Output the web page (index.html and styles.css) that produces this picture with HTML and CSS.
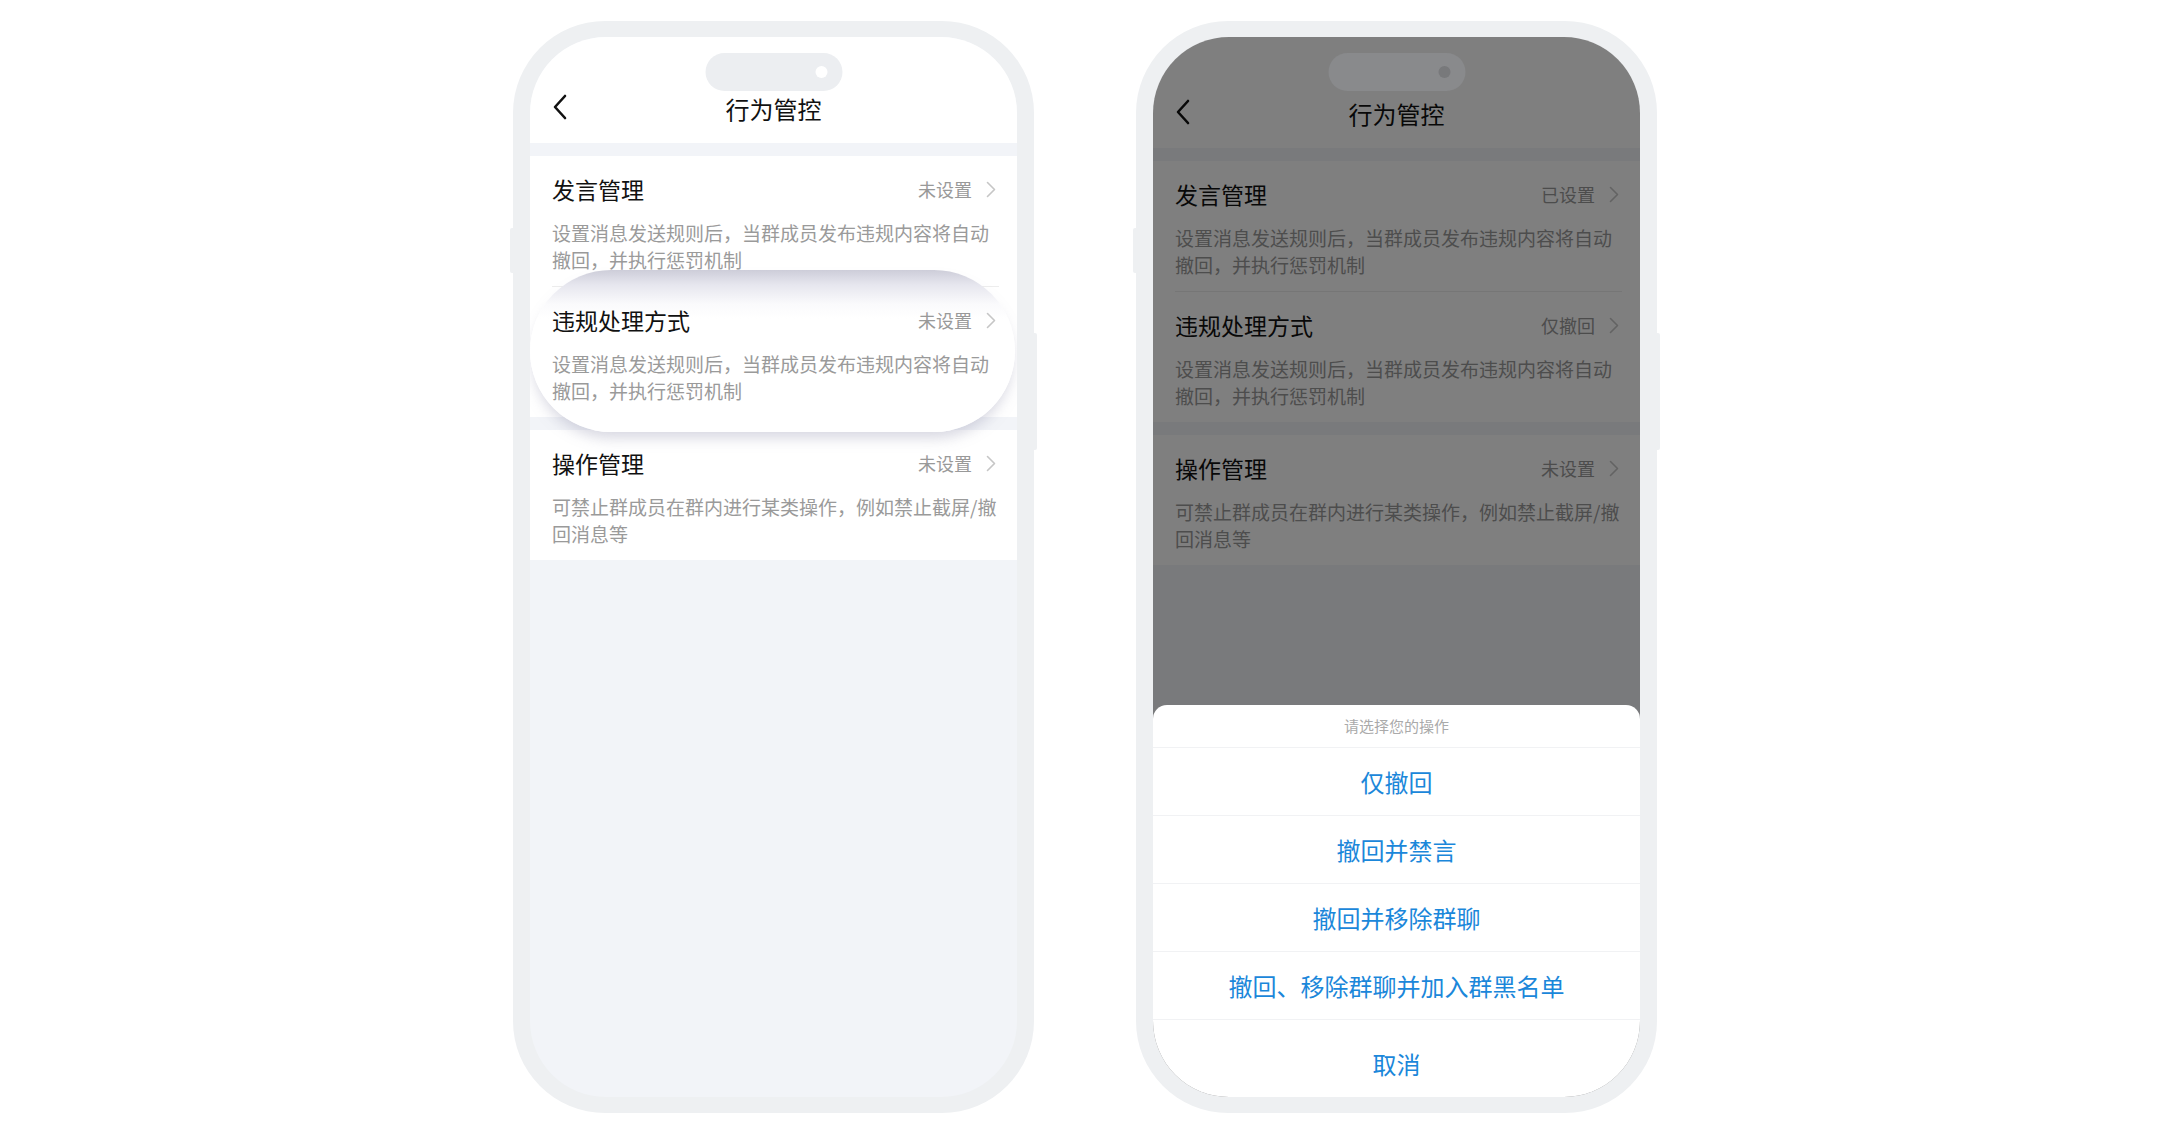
FILE: index.html
```html
<!DOCTYPE html>
<html lang="zh-CN">
<head>
  <meta charset="UTF-8" />
  <meta name="viewport" content="width=device-width, initial-scale=1" />
  <title>行为管控</title>
  <link rel="stylesheet" href="styles.css">
</head>
<body>
  <div class="stage">

    <!-- 左：默认状态，高亮“违规处理方式” -->
    <div class="phone">
      <div class="screen">
        <div class="island"><span class="cam"></span></div>
        <header class="nav">
          <svg class="back" width="16" height="26" viewBox="0 0 16 26"><polyline points="13,2 3,13 13,24" fill="none" stroke="#111" stroke-width="2.6" stroke-linecap="round" stroke-linejoin="round"/></svg>
          <h1>行为管控</h1>
        </header>

        <section class="group">
          <div class="row">
            <div class="row-head">
              <h2>发言管理</h2>
              <span class="status">未设置<svg width="10" height="17" viewBox="0 0 10 17"><polyline points="1.5,1.5 8.5,8.5 1.5,15.5" fill="none" stroke="#c6c6c6" stroke-width="1.6" stroke-linecap="round" stroke-linejoin="round"/></svg></span>
            </div>
            <p class="desc">设置消息发送规则后，当群成员发布违规内容将自动撤回，并执行惩罚机制</p>
          </div>
          <div class="row row-focus">
            <div class="row-head">
              <h2>违规处理方式</h2>
              <span class="status">未设置<svg width="10" height="17" viewBox="0 0 10 17"><polyline points="1.5,1.5 8.5,8.5 1.5,15.5" fill="none" stroke="#c6c6c6" stroke-width="1.6" stroke-linecap="round" stroke-linejoin="round"/></svg></span>
            </div>
            <p class="desc">设置消息发送规则后，当群成员发布违规内容将自动撤回，并执行惩罚机制</p>
          </div>
        </section>

        <section class="group">
          <div class="row">
            <div class="row-head">
              <h2>操作管理</h2>
              <span class="status">未设置<svg width="10" height="17" viewBox="0 0 10 17"><polyline points="1.5,1.5 8.5,8.5 1.5,15.5" fill="none" stroke="#c6c6c6" stroke-width="1.6" stroke-linecap="round" stroke-linejoin="round"/></svg></span>
            </div>
            <p class="desc">可禁止群成员在群内进行某类操作，例如禁止截屏/撤回消息等</p>
          </div>
        </section>
      </div>
    </div>

    <!-- 右：弹出操作菜单 -->
    <div class="phone">
      <div class="screen">
        <div class="island island-dim"><span class="cam"></span></div>
        <header class="nav nav-tall">
          <svg class="back" width="16" height="26" viewBox="0 0 16 26"><polyline points="13,2 3,13 13,24" fill="none" stroke="#111" stroke-width="2.6" stroke-linecap="round" stroke-linejoin="round"/></svg>
          <h1>行为管控</h1>
        </header>

        <section class="group">
          <div class="row">
            <div class="row-head">
              <h2>发言管理</h2>
              <span class="status">已设置<svg width="10" height="17" viewBox="0 0 10 17"><polyline points="1.5,1.5 8.5,8.5 1.5,15.5" fill="none" stroke="#c6c6c6" stroke-width="1.6" stroke-linecap="round" stroke-linejoin="round"/></svg></span>
            </div>
            <p class="desc">设置消息发送规则后，当群成员发布违规内容将自动撤回，并执行惩罚机制</p>
          </div>
          <div class="row">
            <div class="row-head">
              <h2>违规处理方式</h2>
              <span class="status">仅撤回<svg width="10" height="17" viewBox="0 0 10 17"><polyline points="1.5,1.5 8.5,8.5 1.5,15.5" fill="none" stroke="#c6c6c6" stroke-width="1.6" stroke-linecap="round" stroke-linejoin="round"/></svg></span>
            </div>
            <p class="desc">设置消息发送规则后，当群成员发布违规内容将自动撤回，并执行惩罚机制</p>
          </div>
        </section>

        <section class="group">
          <div class="row">
            <div class="row-head">
              <h2>操作管理</h2>
              <span class="status">未设置<svg width="10" height="17" viewBox="0 0 10 17"><polyline points="1.5,1.5 8.5,8.5 1.5,15.5" fill="none" stroke="#c6c6c6" stroke-width="1.6" stroke-linecap="round" stroke-linejoin="round"/></svg></span>
            </div>
            <p class="desc">可禁止群成员在群内进行某类操作，例如禁止截屏/撤回消息等</p>
          </div>
        </section>

        <div class="mask"></div>

        <div class="sheet">
          <div class="sheet-title">请选择您的操作</div>
          <div class="sheet-item">仅撤回</div>
          <div class="sheet-item">撤回并禁言</div>
          <div class="sheet-item">撤回并移除群聊</div>
          <div class="sheet-item">撤回、移除群聊并加入群黑名单</div>
          <div class="sheet-cancel">取消</div>
        </div>
      </div>
    </div>

  </div>
</body>
</html>
```

FILE: styles.css
```css
body {
  margin: 0;
  background: #ffffff;
  font-family: "Noto Sans CJK SC", "Noto Sans", sans-serif;
}
.stage {
  display: flex;
  justify-content: center;
  gap: 102px;
  padding-top: 21px;
}
.phone {
  position: relative;
  width: 521px;
  height: 1092px;
  box-sizing: border-box;
  padding: 16px 17px;
  background: #eef0f2;
  border-radius: 92px;
}
/* side buttons */
.phone::before {
  content: "";
  position: absolute;
  left: -3px;
  top: 207px;
  width: 3px;
  height: 45px;
  background: #eef0f2;
  border-radius: 2px 0 0 2px;
}
.phone::after {
  content: "";
  position: absolute;
  right: -3px;
  top: 312px;
  width: 3px;
  height: 117px;
  background: #eef0f2;
  border-radius: 0 2px 2px 0;
}
.screen {
  position: relative;
  height: 100%;
  border-radius: 76px;
  overflow: hidden;
  background: #f2f4f8;
}
.island {
  position: absolute;
  top: 16px;
  left: 50%;
  transform: translateX(-50%);
  width: 137px;
  height: 38px;
  border-radius: 19px;
  background: #eceef1;
  z-index: 3;
}
.island .cam {
  position: absolute;
  right: 15px;
  top: 13px;
  width: 12px;
  height: 12px;
  border-radius: 50%;
  background: #ffffff;
}
.island-dim {
  background: #898a8c;
}
.island-dim .cam {
  background: #78797b;
}
.nav {
  height: 106px;
  box-sizing: border-box;
  padding: 0 22px 14px;
  background: #ffffff;
  display: grid;
  grid-template-columns: 1fr auto 1fr;
  align-content: end;
  align-items: end;
}
.nav-tall {
  height: 111px;
}
.nav .back {
  margin-bottom: 9px;
}
.nav h1 {
  margin: 0;
  height: 40px;
  line-height: 40px;
  font-size: 24px;
  font-weight: 400;
  color: #111;
}
.group {
  margin-top: 13px;
  background: #ffffff;
}
.row {
  margin: 0 18px 0 22px;
  padding: 18px 0 13px;
}
.row + .row {
  border-top: 1px solid #ededed;
}
.row-head {
  display: flex;
  justify-content: space-between;
  align-items: center;
  height: 30px;
}
.row-head h2 {
  margin: 0;
  font-size: 23px;
  font-weight: 400;
  color: #111;
}
.status {
  display: flex;
  align-items: center;
  gap: 14px;
  margin-right: 3px;
  font-size: 18px;
  color: #999;
}
.desc {
  margin: 15px 0 0;
  font-size: 19px;
  line-height: 27px;
  color: #9a9a9a;
}
/* highlighted bubble */
.row-focus {
  position: relative;
  z-index: 1;
  border-top-color: transparent;
}
.row-focus::before {
  content: "";
  position: absolute;
  left: -22px;
  right: -16px;
  top: -17px;
  bottom: -15px;
  border-radius: 82px;
  background: linear-gradient(to bottom, #cdcdd9 0%, #e6e6ee 9%, #fafafc 21%, #ffffff 30%);
  box-shadow: 0 9px 14px -3px rgba(140, 140, 170, 0.35);
  z-index: -1;
}
.mask {
  position: absolute;
  inset: 0;
  background: rgba(0, 0, 0, 0.5);
  z-index: 2;
}
.sheet {
  position: absolute;
  left: 0;
  right: 0;
  bottom: 0;
  background: #ffffff;
  border-radius: 14px 14px 0 0;
  text-align: center;
  z-index: 4;
}
.sheet-title {
  height: 42px;
  line-height: 42px;
  font-size: 15px;
  color: #aaa;
  border-bottom: 1px solid #f1f2f4;
}
.sheet-item {
  height: 67px;
  line-height: 67px;
  font-size: 24px;
  color: #1b87da;
  border-bottom: 1px solid #f1f2f4;
}
.sheet-cancel {
  height: 66px;
  line-height: 66px;
  padding-top: 11px;
  font-size: 24px;
  color: #1b87da;
}
```
